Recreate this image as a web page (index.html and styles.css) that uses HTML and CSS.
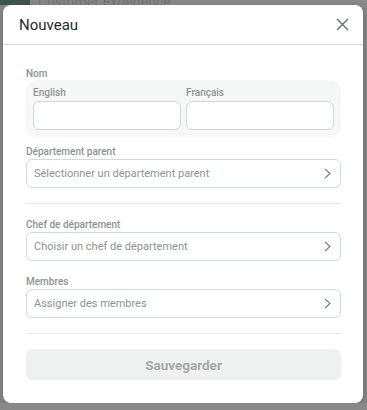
FILE: index.html
```html
<!DOCTYPE html>
<html lang="fr">
<head>
    <meta charset="UTF-8">
    <meta name="viewport" content="width=device-width, initial-scale=1.0">
    <title>Nouveau</title>
    <link rel="stylesheet" href="styles.css">
</head>
<body>
    <div class="backdrop-bar">
        <div class="bg-logo"></div>
        <div class="bg-title">Customer Experience</div>
    </div>

    <div class="modal">
        <header class="modal-header">
            <h1>Nouveau</h1>
            <button class="close-btn" aria-label="Fermer">
                <svg width="13" height="13" viewBox="0 0 13 13"><path d="M1 1 L12 12 M12 1 L1 12" stroke="#5f6e6b" stroke-width="1.4" fill="none"/></svg>
            </button>
        </header>

        <form class="modal-body">
            <!-- Nom -->
            <label class="field-label">Nom</label>
            <div class="lang-group">
                <div class="lang-field">
                    <label class="sub-label">English</label>
                    <input type="text" class="text-input">
                </div>
                <div class="lang-field">
                    <label class="sub-label">Français</label>
                    <input type="text" class="text-input">
                </div>
            </div>

            <div class="field">
                <label class="field-label">Département parent</label>
                <div class="select-box">
                    <span>Sélectionner un département parent</span>
                    <svg width="7" height="11" viewBox="0 0 7 11"><path d="M1 1 L6 5.5 L1 10" stroke="#7b7f7e" stroke-width="1.2" fill="none"/></svg>
                </div>
            </div>

            <hr class="divider">

            <div class="field">
                <label class="field-label">Chef de département</label>
                <div class="select-box">
                    <span>Choisir un chef de département</span>
                    <svg width="7" height="11" viewBox="0 0 7 11"><path d="M1 1 L6 5.5 L1 10" stroke="#7b7f7e" stroke-width="1.2" fill="none"/></svg>
                </div>
            </div>

            <div class="field">
                <label class="field-label">Membres</label>
                <div class="select-box">
                    <span>Assigner des membres</span>
                    <svg width="7" height="11" viewBox="0 0 7 11"><path d="M1 1 L6 5.5 L1 10" stroke="#7b7f7e" stroke-width="1.2" fill="none"/></svg>
                </div>
            </div>

            <hr class="divider">

            <button type="button" class="save-btn" disabled>Sauvegarder</button>
        </form>
    </div>
</body>
</html>
```

FILE: styles.css
```css
body {
    font-family: 'Roboto', 'Liberation Sans', sans-serif;
    background-color: #898989;
    margin: 0;
    padding: 0;
    overflow: hidden;
}

.backdrop-bar {
    height: 5px;
    display: flex;
    overflow: hidden;
}

.bg-logo {
    width: 30px;
    height: 5px;
    background-color: #3e524e;
}

.bg-title {
    margin-left: 8px;
    height: 5px;
    overflow: hidden;
    font-size: 14px;
    line-height: 4px;
    color: #6f7372;
}

.modal {
    width: 360px;
    height: 398px;
    margin: 0 0 0 3px;
    background: #ffffff;
    border-radius: 8px;
    box-shadow: 0 3px 8px rgba(0, 0, 0, 0.25);
    box-sizing: border-box;
    display: flex;
    flex-direction: column;
}

.modal-header {
    height: 40px;
    padding: 0 10px 0 16px;
    border-bottom: 1px solid #d3dcda;
    display: flex;
    justify-content: space-between;
    align-items: center;
    box-sizing: border-box;
}

.modal-header h1 {
    font-size: 15px;
    font-weight: 400;
    color: #262a29;
    margin: 0;
}

.close-btn {
    background: none;
    border: none;
    padding: 4px;
    display: flex;
    cursor: pointer;
}

.modal-body {
    display: flex;
    flex-direction: column;
    padding: 23px 22px 0 23px;
}

.field-label {
    font-size: 10px;
    line-height: 11px;
    font-weight: 500;
    color: #8c9391;
    margin-bottom: 1px;
}

.lang-group {
    display: flex;
    gap: 5px;
    padding: 7px;
    background: #f6f8f7;
    border-radius: 10px;
    margin-bottom: 9px;
}

.lang-field {
    flex: 1;
    min-width: 0;
    display: flex;
    flex-direction: column;
}

.sub-label {
    font-size: 10px;
    line-height: 11px;
    font-weight: 500;
    color: #8c9391;
    margin-bottom: 3px;
}

.text-input {
    width: 100%;
    height: 29px;
    border: 1px solid #cfd9d7;
    border-radius: 6px;
    background: #ffffff;
    box-sizing: border-box;
}

.field {
    display: flex;
    flex-direction: column;
    margin-bottom: 15px;
}

.field .field-label {
    margin-bottom: 2px;
}

.select-box {
    height: 29px;
    border: 1px solid #cfd9d7;
    border-radius: 6px;
    padding: 0 9px 0 7px;
    display: flex;
    justify-content: space-between;
    align-items: center;
    font-size: 11px;
    color: #8e9492;
    box-sizing: border-box;
}

.divider {
    border: none;
    border-top: 1px solid #e3e9e8;
    margin: 0 0 15px;
}

.save-btn {
    height: 31px;
    border: none;
    border-radius: 6px;
    background-color: #eff1f1;
    color: #a4aaa9;
    font-family: inherit;
    font-size: 13.5px;
    font-weight: 700;
}
```
